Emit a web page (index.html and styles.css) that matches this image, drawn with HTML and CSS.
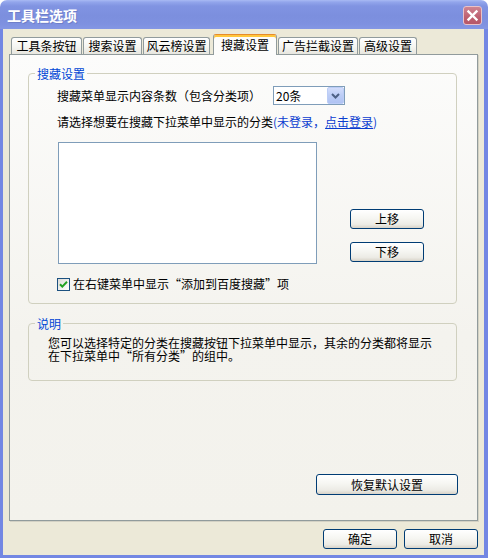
FILE: index.html
```html
<!DOCTYPE html>
<html lang="zh-CN">
<head>
<meta charset="utf-8">
<title>工具栏选项</title>
<link rel="stylesheet" href="styles.css">
</head>
<body>
<div class="window">
  <div class="titlebar">
    <span class="title">工具栏选项</span>
    <span class="close">
      <svg width="17" height="17" viewBox="0 0 17 17"><path d="M4.5 4.5 L12.5 12.5 M12.5 4.5 L4.5 12.5" stroke="#fff" stroke-width="2.4" stroke-linecap="square" fill="none"/></svg>
    </span>
  </div>
  <div class="frame">
    <div class="tabs">
      <div class="tab t1">工具条按钮</div>
      <div class="tab t2">搜索设置</div>
      <div class="tab t3">风云榜设置</div>
      <div class="tab t4 sel">搜藏设置</div>
      <div class="tab t5">广告拦截设置</div>
      <div class="tab t6">高级设置</div>
    </div>
    <div class="panel">
      <fieldset class="group g1">
        <legend>搜藏设置</legend>
        <div class="gbody">
          <div class="row1">
            <span>搜藏菜单显示内容条数（包含分类项）</span>
            <div class="combo">
              <span class="combo-text">20条</span>
              <span class="combo-btn">
                <svg width="15" height="15" viewBox="0 0 15 15"><path d="M4 6 L7.5 9.5 L11 6" stroke="#4D6185" stroke-width="2" fill="none"/></svg>
              </span>
            </div>
          </div>
          <div class="row2">请选择想要在搜藏下拉菜单中显示的分类<span class="link">(未登录，<u>点击登录</u>)</span></div>
          <div class="listrow">
            <div class="listbox"></div>
            <div class="move">
              <button class="btn mv">上移</button>
              <button class="btn mv">下移</button>
            </div>
          </div>
          <div class="check">
            <span class="box">
              <svg width="11" height="11" viewBox="0 0 11 11"><path d="M2 5.2 L4.3 7.6 L9 2.8" stroke="#21A121" stroke-width="2" fill="none"/></svg>
            </span>
            <span class="check-label">在右键菜单中显示<span class="q">“</span>添加到百度搜藏<span class="q">”</span>项</span>
          </div>
        </div>
      </fieldset>
      <fieldset class="group g2">
        <legend>说明</legend>
        <p class="desc">您可以选择特定的分类在搜藏按钮下拉菜单中显示，其余的分类都将显示<br>在下拉菜单中<span class="q">“</span>所有分类<span class="q">”</span>的组中。</p>
      </fieldset>
      <button class="btn restore">恢复默认设置</button>
    </div>
    <div class="actions">
      <button class="btn act">确定</button>
      <button class="btn act">取消</button>
    </div>
  </div>
</div>
</body>
</html>
```
FILE: styles.css
```css
* { box-sizing: border-box; }
html, body { margin: 0; padding: 0; background: #ffffff; }
body {
  font-family: "Noto Sans CJK SC", "Noto Sans", sans-serif;
  font-size: 12px;
  color: #000;
}
.window {
  width: 488px;
  height: 558px;
  display: flex;
  flex-direction: column;
}
.titlebar {
  height: 29px;
  flex: none;
  display: flex;
  align-items: flex-start;
  border-radius: 7px 7px 0 0;
  background: linear-gradient(#a9baf3 0, #93a6ec 2px, #8194e2 6px, #7c8fde 16px, #7e91e0 24px, #8497e4 29px);
}
.title {
  margin: 6px 0 0 7px;
  font-size: 14px;
  line-height: 18px;
  font-weight: bold;
  color: #ffffff;
  text-shadow: 1px 1px 0 #6f7fc9;
}
.close {
  margin: 6px 6px 0 auto;
  width: 19px;
  height: 19px;
  border-radius: 3px;
  border: 1px solid #e9c2c8;
  background: linear-gradient(#cf8592, #bd6070 60%, #b65868);
  display: flex;
  align-items: center;
  justify-content: center;
}
.close svg { display: block; }
.frame {
  flex: 1;
  display: flex;
  flex-direction: column;
  background: #ece9d8;
  border-style: solid;
  border-color: #7387e3;
  border-width: 0 4px 3px 3px;
  padding: 5px 6px 6px 6px;
}
.tabs {
  display: flex;
  align-items: flex-start;
  height: 21px;
  margin-bottom: -1px;
  padding-left: 2px;
  gap: 1px;
  position: relative;
  z-index: 1;
}
.tab {
  height: 17px;
  margin-top: 3px;
  border: 1px solid #919b9c;
  border-bottom: none;
  border-radius: 3px 3px 0 0;
  background: linear-gradient(#ffffff, #f5f5f1 55%, #e7e6df);
  text-align: center;
  line-height: 16px;
  white-space: nowrap;
}
.t1 { width: 71px; }
.t2 { width: 59px; }
.t3 { width: 67px; margin-right: 2px; }
.t4 { width: 64px; }
.t5 { width: 80px; }
.t6 { width: 58px; }
.tab.sel {
  height: 21px;
  margin-top: 0;
  border-top: 1px solid #e68b2c;
  box-shadow: inset 0 2px 0 #ffc73c;
  background: #fcfcfb;
  padding-top: 2px;
  line-height: 16px;
}
.panel {
  flex: 1;
  display: flex;
  flex-direction: column;
  border: 1px solid #919b9c;
  background: linear-gradient(#fcfcfb, #f4f3ee 60%, #f3f2ec);
  padding: 12px 20px 25px 18px;
  box-shadow: 1px 1px 0 #d3d1c4;
}
.group {
  margin: 0;
  min-width: 0;
  border: 1px solid #d0d0bf;
  border-radius: 4px;
  padding: 0 0 12px 6px;
}
.group legend {
  padding: 0 2px;
  font-size: 12px;
  line-height: 13px;
  color: #0046d5;
}
.gbody { padding-left: 22px; }
.row1 {
  display: flex;
  align-items: center;
  height: 19px;
  margin-top: 6px;
  line-height: 14px;
}
.combo {
  margin-left: 12px;
  width: 72px;
  height: 19px;
  border: 1px solid #7f9db9;
  background: #ffffff;
  display: flex;
  align-items: center;
}
.combo-text { padding-left: 2px; line-height: 14px; }
.combo-btn {
  margin-left: auto;
  width: 17px;
  height: 17px;
  border: 1px solid #bccdf6;
  border-radius: 2px;
  background: linear-gradient(#d3ddfb, #bccdf6 50%, #b0c3f3);
  display: flex;
  align-items: center;
  justify-content: center;
}
.combo-btn svg { display: block; }
.row2 {
  margin-top: 10px;
  line-height: 14px;
  white-space: nowrap;
}
.link { color: #0b3dd0; }
.link u { text-decoration: underline; }
.listrow {
  margin-top: 13px;
  display: flex;
  align-items: flex-end;
}
.listbox {
  margin-left: 1px;
  width: 259px;
  height: 122px;
  border: 1px solid #7f9db9;
  background: #ffffff;
}
.move {
  margin-left: 33px;
  padding-bottom: 2px;
  display: flex;
  flex-direction: column;
  gap: 13px;
}
.btn {
  font-family: "Noto Sans CJK SC", "Noto Sans", sans-serif;
  font-size: 12px;
  color: #000;
  padding: 0;
  border: 1px solid #003c74;
  border-radius: 3px;
  background: linear-gradient(#ffffff, #f6f6f2 45%, #ecebe5 80%, #d8d3c8);
  line-height: 14px;
}
.mv { width: 74px; height: 20px; }
.check {
  margin-top: 13px;
  height: 14px;
  display: flex;
  align-items: center;
  line-height: 14px;
}
.box {
  width: 13px;
  height: 13px;
  border: 1px solid #1c5180;
  background: linear-gradient(135deg, #dcdcd7, #ffffff);
  display: flex;
  align-items: center;
  justify-content: center;
}
.box svg { display: block; }
.check-label { margin-left: 3px; white-space: nowrap; }
.q { font-variant-east-asian: full-width; }
.g2 { margin-top: 13px; padding-bottom: 18px; }
.desc {
  margin: 6px 0 0 13px;
  line-height: 13px;
  white-space: nowrap;
}
.restore {
  margin-top: auto;
  margin-right: -1px;
  align-self: flex-end;
  width: 142px;
  height: 21px;
}
.actions {
  margin-top: 8px;
  display: flex;
  justify-content: flex-end;
  gap: 7px;
}
.act { width: 74px; height: 20px; }
```
